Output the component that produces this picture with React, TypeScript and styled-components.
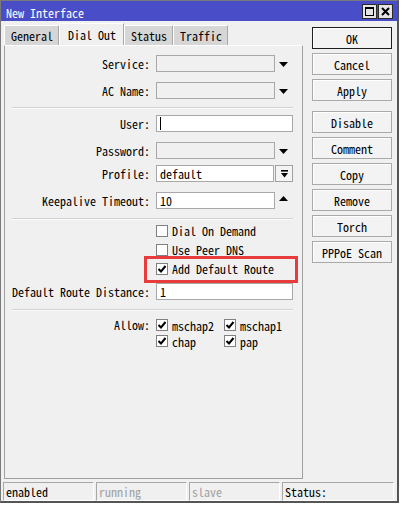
import React from "react";
import styled, { createGlobalStyle } from "styled-components";

const Global = createGlobalStyle`
  html, body { margin: 0; padding: 0; background: #ffffff; }
  body {
    width: 402px; height: 506px; overflow: hidden;
    font-family: "Noto Sans Mono CJK SC", "Liberation Mono", monospace;
    font-size: 12px; color: #000;
  }
`;

const Window = styled.div`
  box-sizing: border-box;
  width: 399px;
  height: 503px;
  border: 1px solid #7a7a7a;
  border-right: 2px solid #555;
  border-bottom: 2px solid #555;
  background: #f0f0f0;
  display: flex;
  flex-direction: column;
`;

const TitleBar = styled.div`
  height: 20px;
  background: #4a4dc8;
  display: flex;
  align-items: center;
  padding: 0 4px 0 5px;
  color: #fff;
`;

const TitleText = styled.div`
  flex: 1;
  padding-top: 2px;
  white-space: nowrap;
`;

const TitleButtons = styled.div`
  display: flex;
  gap: 1px;
`;

const TitleButton = styled.div`
  box-sizing: border-box;
  width: 15px;
  height: 15px;
  background: #e4e4e4;
  border: 1px solid #2a2a2a;
  display: flex;
  align-items: center;
  justify-content: center;
`;

const Main = styled.div`
  height: 458px;
  display: flex;
  padding-left: 3px;
`;

const LeftCol = styled.div`
  width: 299px;
  display: flex;
  flex-direction: column;
  padding-top: 2px;
`;

const TabStrip = styled.div`
  display: flex;
  align-items: flex-end;
  height: 22px;
`;

const Tab = styled.div<{ $active?: boolean }>`
  box-sizing: border-box;
  height: ${(p) => (p.$active ? 22 : 20)}px;
  padding: ${(p) => (p.$active ? "0 7px 0 8px" : "0 5px 0 6px")};
  background: ${(p) => (p.$active ? "#f0f0f0" : "#d6d6d6")};
  border-top: 1px solid #fff;
  border-left: 1px solid #fff;
  border-right: 1px solid #a8a8a8;
  display: flex;
  align-items: center;
  white-space: nowrap;
`;

const Panel = styled.div`
  position: relative;
  box-sizing: border-box;
  height: 434px;
  border-top: 1px solid #fff;
  border-left: 1px solid #a0a0a0;
  border-right: 1px solid #a0a0a0;
  border-bottom: 1px solid #a0a0a0;
  display: flex;
  flex-direction: column;
`;

const Row = styled.div<{ $mt: number }>`
  display: flex;
  align-items: center;
  height: 17px;
  margin-top: ${(p) => p.$mt}px;
`;

const Label = styled.div`
  width: 145px;
  margin-right: 6px;
  text-align: right;
  white-space: nowrap;
`;

const TextBox = styled.div<{ $w: number; $on?: boolean }>`
  box-sizing: border-box;
  width: ${(p) => p.$w}px;
  height: 17px;
  border: 1px solid #a8a8a8;
  background: ${(p) => (p.$on ? "#fff" : "#f0f0f0")};
  padding-left: 3px;
  display: flex;
  align-items: center;
  white-space: nowrap;
  flex: none;
`;

const Caret = styled.span`
  width: 1px;
  height: 13px;
  background: #000;
`;

const ArrowSlot = styled.div<{ $dy: number }>`
  width: 18px;
  height: 17px;
  display: flex;
  align-items: center;
  padding-left: 4px;
  box-sizing: border-box;
  svg { transform: translateY(${(p) => p.$dy}px); }
`;

const SideButton = styled.div`
  box-sizing: border-box;
  width: 18px;
  height: 17px;
  margin-left: 1px;
  border: 1px solid #a0a0a0;
  background: #f4f4f4;
  display: flex;
  align-items: center;
  justify-content: center;
`;

const Separator = styled.div<{ $mt: number }>`
  margin: ${(p) => p.$mt}px 0 0 7px;
  width: 281px;
  height: 1px;
  background: #d2d2d2;
  border-bottom: 1px solid #fbfbfb;
`;

const CheckRow = styled.div<{ $mt: number }>`
  display: flex;
  align-items: center;
  gap: 4px;
  height: 17px;
  margin: ${(p) => p.$mt}px 0 0 151px;
  white-space: nowrap;
`;

const Box = styled.span`
  box-sizing: border-box;
  width: 12px;
  height: 12px;
  border: 1px solid #808080;
  background: #fff;
  display: inline-flex;
  align-items: center;
  justify-content: center;
  flex: none;
`;

const AllowBlock = styled.div<{ $mt: number }>`
  display: flex;
  align-items: flex-start;
  margin-top: ${(p) => p.$mt}px;
`;

const AllowLabel = styled(Label)`
  line-height: 16px;
  height: 16px;
`;

const AllowGrid = styled.div`
  display: grid;
  grid-template-columns: 68px 68px;
  grid-auto-rows: 16px;
`;

const AllowItem = styled.div`
  display: flex;
  align-items: center;
  gap: 4px;
  white-space: nowrap;
`;

const Highlight = styled.div`
  position: absolute;
  left: 139px;
  top: 210px;
  width: 154px;
  height: 27px;
  box-sizing: border-box;
  border: 3px solid #e83c3c;
  pointer-events: none;
`;

const ButtonCol = styled.div`
  margin-left: 9px;
  padding-top: 6px;
  width: 80px;
  display: flex;
  flex-direction: column;
`;

const ActionButton = styled.div<{ $primary?: boolean; $mt: number }>`
  box-sizing: border-box;
  height: 22px;
  margin-top: ${(p) => p.$mt}px;
  border: 1px solid ${(p) => (p.$primary ? "#1e1e1e" : "#a9a9a9")};
  background: #f3f3f3;
  box-shadow: inset 1px 1px 0 #ffffff;
  display: flex;
  align-items: center;
  justify-content: center;
  white-space: nowrap;
`;

const StatusBar = styled.div`
  display: flex;
  gap: 2px;
  margin-top: 3px;
  padding-left: 2px;
  height: 19px;
`;

const StatusCell = styled.div<{ $w: number; $dim?: boolean }>`
  box-sizing: border-box;
  width: ${(p) => p.$w}px;
  height: 19px;
  border-top: 1px solid #a8a8a8;
  border-left: 1px solid #a8a8a8;
  border-right: 1px solid #fff;
  border-bottom: 1px solid #fff;
  padding-left: 2px;
  display: flex;
  align-items: center;
  color: ${(p) => (p.$dim ? "#a0a0a0" : "#000")};
  white-space: nowrap;
`;

const DownTri = () => (
  <svg width="9" height="5" viewBox="0 0 9 5">
    <polygon points="0,0 9,0 4.5,5" fill="#000" />
  </svg>
);

const UpTri = () => (
  <svg width="9" height="5" viewBox="0 0 9 5">
    <polygon points="0,5 9,5 4.5,0" fill="#000" />
  </svg>
);

const Check = () => (
  <svg width="10" height="10" viewBox="0 0 10 10">
    <path d="M1.5 5 L4 7.5 L8.5 2" fill="none" stroke="#000" strokeWidth="2" />
  </svg>
);

const CheckBox = ({ on }: { on?: boolean }) => <Box>{on ? <Check /> : null}</Box>;

export default function App() {
  return (
    <>
      <Global />
      <Window>
        <TitleBar>
          <TitleText>New Interface</TitleText>
          <TitleButtons>
            <TitleButton>
              <svg width="11" height="11" viewBox="0 0 11 11">
                <rect x="1.5" y="1.5" width="8" height="8" fill="none" stroke="#000" strokeWidth="1" />
                <rect x="1" y="1" width="9" height="2" fill="#000" />
              </svg>
            </TitleButton>
            <TitleButton>
              <svg width="11" height="11" viewBox="0 0 11 11">
                <path d="M2 2 L9 9 M9 2 L2 9" stroke="#000" strokeWidth="2" />
              </svg>
            </TitleButton>
          </TitleButtons>
        </TitleBar>
        <Main>
          <LeftCol>
            <TabStrip>
              <Tab>General</Tab>
              <Tab $active>Dial Out</Tab>
              <Tab>Status</Tab>
              <Tab>Traffic</Tab>
            </TabStrip>
            <Panel>
              <Row $mt={9}>
                <Label>Service:</Label>
                <TextBox $w={119} />
                <ArrowSlot $dy={1}><DownTri /></ArrowSlot>
              </Row>
              <Row $mt={10}>
                <Label>AC Name:</Label>
                <TextBox $w={119} />
                <ArrowSlot $dy={1}><DownTri /></ArrowSlot>
              </Row>
              <Separator $mt={8} />
              <Row $mt={6}>
                <Label>User:</Label>
                <TextBox $w={137} $on><Caret /></TextBox>
              </Row>
              <Row $mt={10}>
                <Label>Password:</Label>
                <TextBox $w={119} />
                <ArrowSlot $dy={1}><DownTri /></ArrowSlot>
              </Row>
              <Row $mt={6}>
                <Label>Profile:</Label>
                <TextBox $w={118} $on>default</TextBox>
                <SideButton>
                  <svg width="7" height="8" viewBox="0 0 7 8">
                    <rect x="0" y="0" width="7" height="1.6" fill="#000" />
                    <polygon points="0,3 7,3 3.5,7.5" fill="#000" />
                  </svg>
                </SideButton>
              </Row>
              <Row $mt={10}>
                <Label>Keepalive Timeout:</Label>
                <TextBox $w={119} $on>10</TextBox>
                <ArrowSlot $dy={-2}><UpTri /></ArrowSlot>
              </Row>
              <Separator $mt={9} />
              <CheckRow $mt={2}>
                <CheckBox />
                <span>Dial On Demand</span>
              </CheckRow>
              <CheckRow $mt={2}>
                <CheckBox />
                <span>Use Peer DNS</span>
              </CheckRow>
              <CheckRow $mt={2}>
                <CheckBox on />
                <span>Add Default Route</span>
              </CheckRow>
              <Row $mt={6}>
                <Label>Default Route Distance:</Label>
                <TextBox $w={137} $on>1</TextBox>
              </Row>
              <Separator $mt={9} />
              <AllowBlock $mt={6}>
                <AllowLabel>Allow:</AllowLabel>
                <AllowGrid>
                  <AllowItem><CheckBox on /><span>mschap2</span></AllowItem>
                  <AllowItem><CheckBox on /><span>mschap1</span></AllowItem>
                  <AllowItem><CheckBox on /><span>chap</span></AllowItem>
                  <AllowItem><CheckBox on /><span>pap</span></AllowItem>
                </AllowGrid>
              </AllowBlock>
              <Highlight />
            </Panel>
          </LeftCol>
          <ButtonCol>
            <ActionButton $primary $mt={0}>OK</ActionButton>
            <ActionButton $mt={4}>Cancel</ActionButton>
            <ActionButton $mt={4}>Apply</ActionButton>
            <ActionButton $mt={10}>Disable</ActionButton>
            <ActionButton $mt={4}>Comment</ActionButton>
            <ActionButton $mt={4}>Copy</ActionButton>
            <ActionButton $mt={4}>Remove</ActionButton>
            <ActionButton $mt={4}>Torch</ActionButton>
            <ActionButton $mt={4}>PPPoE Scan</ActionButton>
          </ButtonCol>
        </Main>
        <StatusBar>
          <StatusCell $w={91}>enabled</StatusCell>
          <StatusCell $w={91} $dim>running</StatusCell>
          <StatusCell $w={91} $dim>slave</StatusCell>
          <StatusCell $w={112}>Status:</StatusCell>
        </StatusBar>
      </Window>
    </>
  );
}
